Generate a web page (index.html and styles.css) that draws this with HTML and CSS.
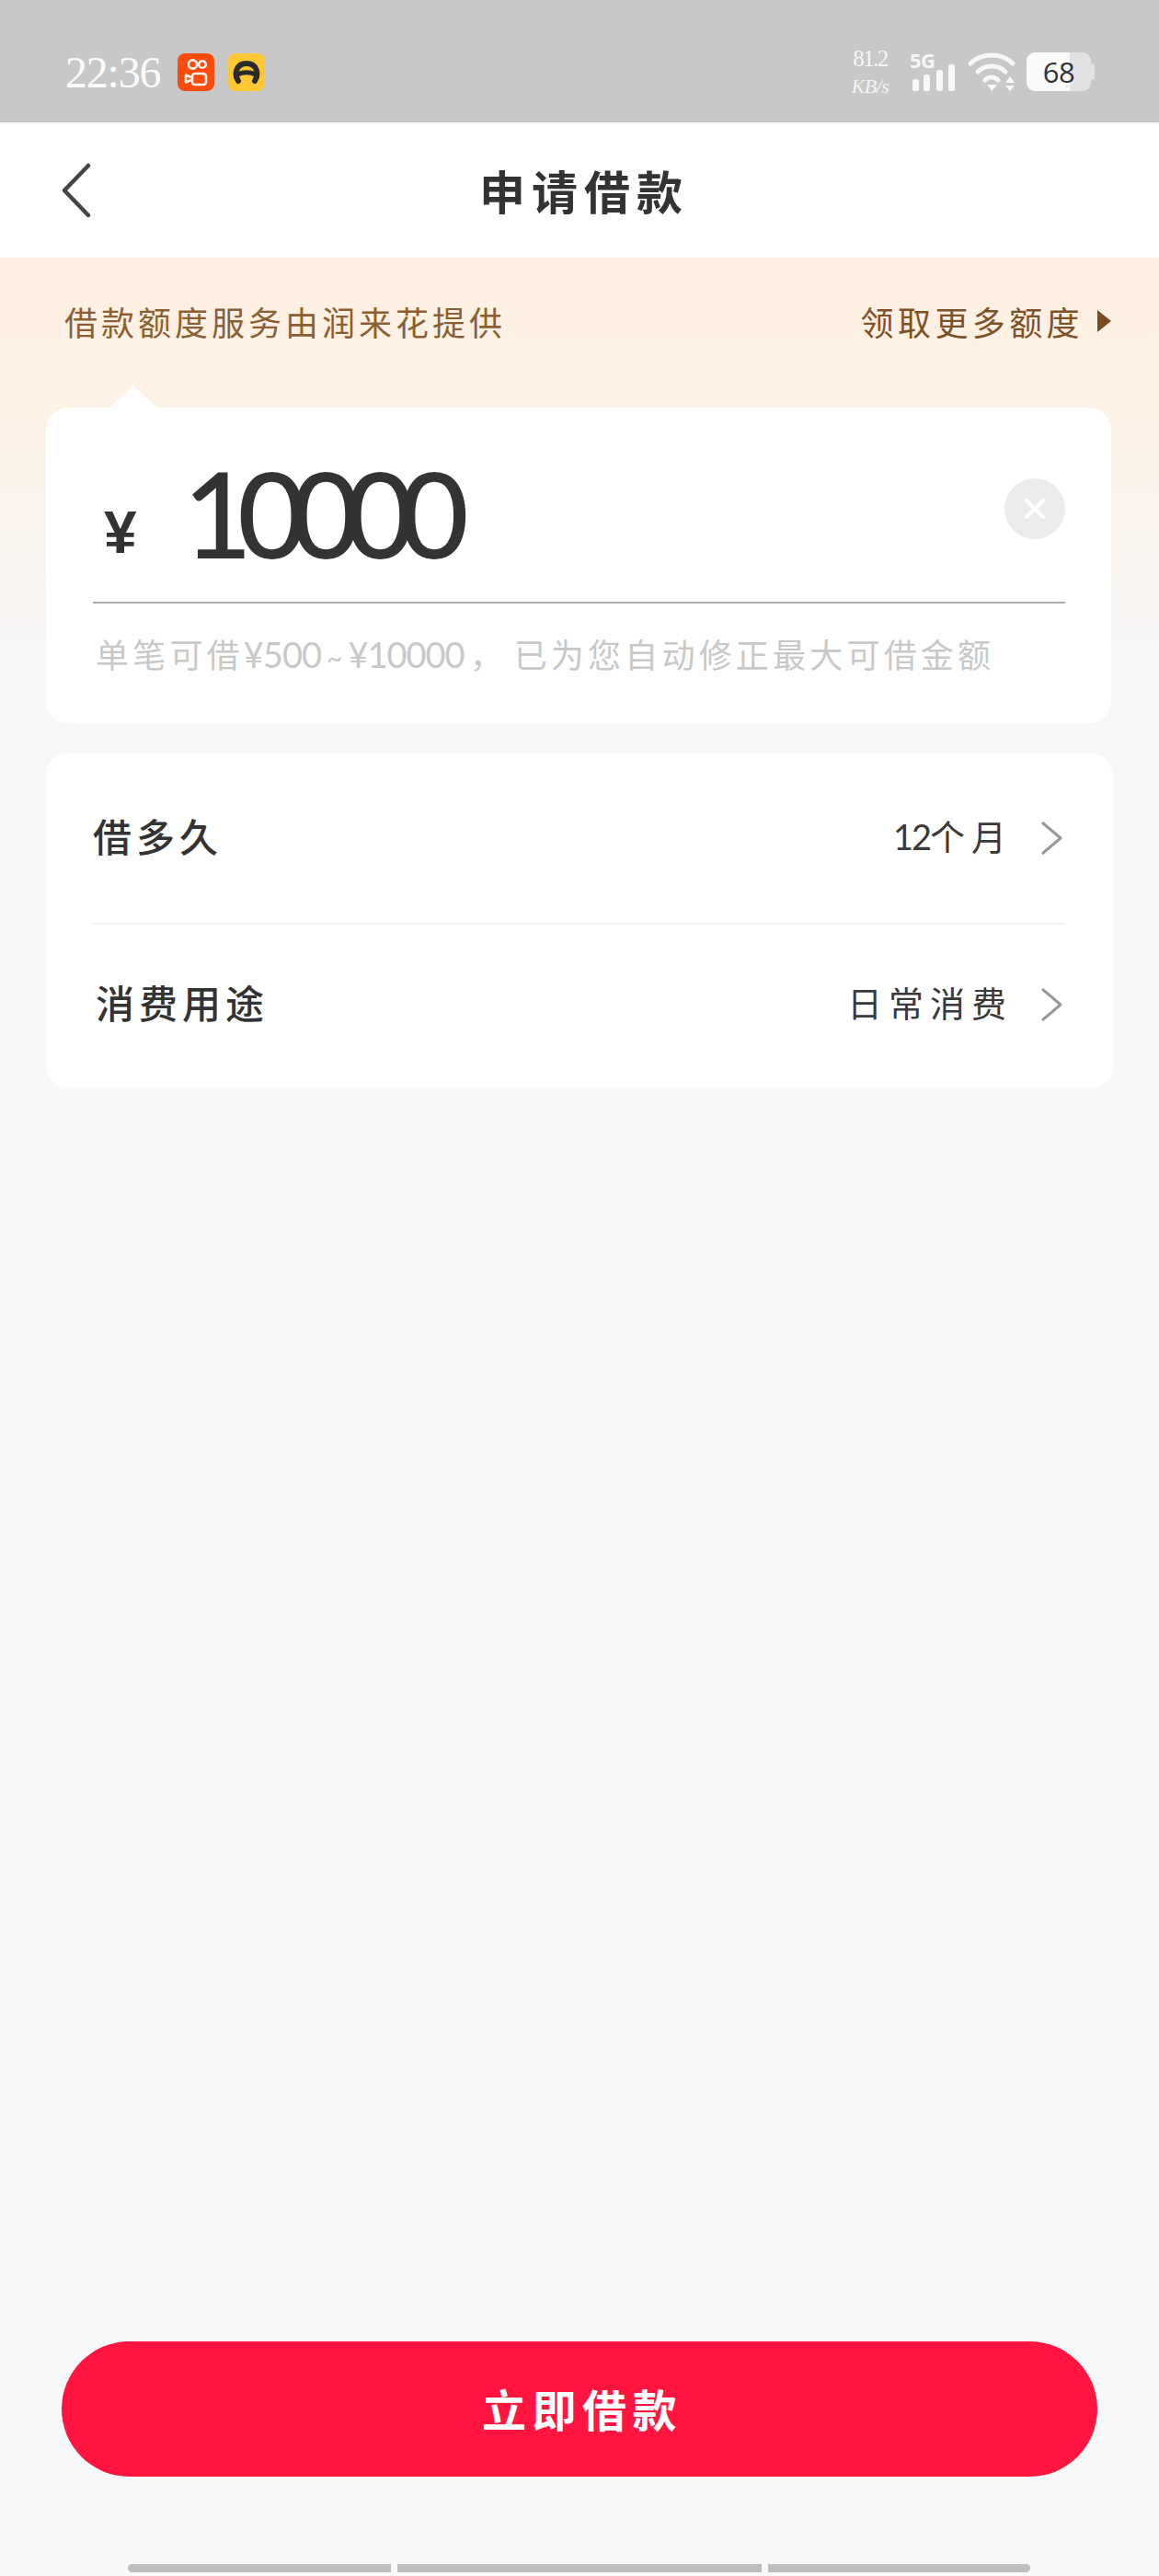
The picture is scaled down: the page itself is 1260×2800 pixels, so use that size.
FILE: index.html
```html
<!DOCTYPE html>
<html lang="zh-CN">
<head>
<meta charset="utf-8">
<title>申请借款</title>
<link rel="stylesheet" href="styles.css">
</head>
<body>
<div class="page">
  <header class="status">
    <div class="status-left">
      <span class="time">22:36</span>
      <svg class="app-icon" viewBox="0 0 40 41"><rect width="40" height="41" rx="8" fill="#fb4c0e"/><g fill="none" stroke="#fff3ea" stroke-width="2.6"><circle cx="16.5" cy="12" r="4.6"/><circle cx="27" cy="12" r="3.8"/><rect x="16" y="22" width="15" height="12" rx="3"/><path d="M15 26l-6-2.5v8L15 29" stroke-linejoin="round"/></g></svg>
      <svg class="app-icon car" viewBox="0 0 40 41"><rect width="40" height="41" rx="8" fill="#fec733"/><path d="M11 30C6 22 9 11 20 11S34 22 29 30" fill="none" stroke="#2a2a2a" stroke-width="6" stroke-linecap="round"/><path d="M10 23Q20 18.500 30 23" fill="none" stroke="#2a2a2a" stroke-width="5"/></svg>
    </div>
    <div class="status-right">
      <div class="speed"><span class="speed-num">81.2</span><span class="speed-unit">KB/s</span></div>
      <div class="signal">
        <span class="net">5G</span>
        <svg class="bars" viewBox="0 0 48 29"><rect x="1" y="16" width="7" height="13" rx="2.500"/><rect x="13" y="11" width="7" height="18" rx="2.500"/><rect x="27" y="6" width="7" height="23" rx="2.500"/><rect x="40" y="0" width="7" height="29" rx="2.500"/></svg>
      </div>
      <svg class="wifi" viewBox="0 0 56 42"><g fill="none" stroke="#f7f7f7" stroke-width="5" stroke-linecap="round"><path d="M5 12C17 0 39 0 51 12"/><path d="M13 21C21 13 35 13 43 21"/><path d="M21 30C25 26 31 26 35 30"/></g><path d="M23 35h11l-5.500 7z M43 33l5-7 5 7z M43 36h10l-5 6z" fill="#f7f7f7"/></svg>
      <div class="battery"><span class="battery-level"></span><span class="battery-rest"></span><span class="battery-nub"></span><span class="battery-num">68</span></div>
    </div>
  </header>

  <nav class="nav">
    <svg class="back" viewBox="0 0 32 60"><path d="M29 3L3 30l26 27" fill="none" stroke="#444" stroke-width="4.500" stroke-linecap="round" stroke-linejoin="round"/></svg>
    <h1 class="title">申请借款</h1>
  </nav>

  <main class="main">
    <div class="banner">
      <span class="banner-text">借款额度服务由润来花提供</span>
      <span class="banner-link">领取更多额度<i class="tri"></i></span>
    </div>

    <section class="card amount-card">
      <div class="amount-row">
        <span class="yen">¥</span>
        <span class="amount">10000</span>
        <span class="clear"><svg viewBox="0 0 66 66"><path d="M24 24l18 18M42 24L24 42" stroke="#fff" stroke-width="4" stroke-linecap="round"/></svg></span>
      </div>
      <p class="hint">单笔可借<span class="hint-num">¥500</span><span class="hint-tilde">~</span><span class="hint-num">¥10000</span><span class="hint-comma">，</span>已为您自动修正最大可借金额</p>
    </section>

    <section class="card options">
      <div class="option">
        <span class="option-label">借多久</span>
        <span class="option-value"><span class="val-num">12</span>个月</span>
        <svg class="chev" viewBox="0 0 24 38"><path d="M2 2l20 17L2 36" fill="none" stroke="#999" stroke-width="3" stroke-linejoin="round"/></svg>
      </div>
      <div class="option option-next">
        <span class="option-label">消费用途</span>
        <span class="option-value">日常消费</span>
        <svg class="chev" viewBox="0 0 24 38"><path d="M2 2l20 17L2 36" fill="none" stroke="#999" stroke-width="3" stroke-linejoin="round"/></svg>
      </div>
    </section>

    <button class="submit">立即借款</button>

    <div class="gesture">
      <span class="seg seg-a"></span><span class="seg seg-b"></span><span class="seg seg-c"></span>
    </div>
  </main>
</div>
</body>
</html>
```

FILE: styles.css
```css
* { box-sizing: border-box; }
html, body { margin: 0; padding: 0; }
body {
  width: 1260px;
  height: 2800px;
  overflow: hidden;
  background: #f7f8fa;
  font-family: "Noto Sans CJK SC", "Noto Sans", sans-serif;
  color: #333;
}
.page { display: flex; flex-direction: column; height: 2800px; }

/* status bar */
.status {
  height: 133px;
  flex: none;
  background: #c8c8c8;
  display: flex;
  justify-content: space-between;
  padding: 52px 70px 0 71px;
  color: #fff;
}
.status-left { display: flex; align-items: flex-start; height: 48px; padding-top: 6px; }
.time {
  font: 48px/41px "Liberation Serif", serif;
  letter-spacing: -1.2px;
  width: 122px;
  color: #fbfbfb;
}
.app-icon { width: 40px; height: 41px; display: block; }
.car { margin-left: 15px; }
.status-right { display: flex; align-items: flex-start; height: 48px; }
.speed { width: 50px; margin-left: -2px; display: flex; flex-direction: column; align-items: center; }
.speed-num { font: 25px/24px "Liberation Serif", serif; letter-spacing: -1.6px; color: #f5f5f5; }
.speed-unit { font: italic 22px/20px "Liberation Serif", serif; margin-top: 8px; color: #f5f5f5; letter-spacing: -0.5px; }
.signal { position: relative; width: 50px; height: 48px; margin-left: 18px; }
.net { display: block; font: 700 22px/20px "Open Sans", sans-serif; margin-top: 3px; color: #f7f7f7; letter-spacing: -0.5px; }
.bars { position: absolute; left: 2px; top: 18px; width: 48px; height: 29px; fill: #f7f7f7; }
.wifi { width: 56px; height: 42px; margin: 5px 0 0 11px; display: block; }
.battery { display: flex; margin: 5px 0 0 10px; height: 42px; align-items: center; position: relative; }
.battery-level { width: 47px; height: 42px; background: #fafafa; border-radius: 9px 0 0 9px; }
.battery-rest { width: 23px; height: 42px; background: #e2e2e2; border-radius: 0 9px 9px 0; }
.battery-nub { width: 4px; height: 18px; background: #e2e2e2; border-radius: 0 3px 3px 0; }
.battery-num {
  position: absolute;
  left: 0;
  top: 0;
  width: 70px;
  text-align: center;
  color: #333;
  font: 31px/42px "Open Sans", sans-serif;
  letter-spacing: -0.5px;
}

/* navigation */
.nav {
  height: 147px;
  flex: none;
  background: #fff;
  display: flex;
  align-items: center;
  justify-content: center;
  position: relative;
}
.back { position: absolute; left: 67px; top: 44px; width: 32px; height: 60px; }
.title { margin: -2px 0 0 10px; font-size: 50px; line-height: 60px; font-weight: 700; letter-spacing: 7px; color: #333; }

/* main */
.main {
  flex: 1;
  display: flex;
  flex-direction: column;
  background: linear-gradient(#fef0e2 0, #fdf2e6 160px, #f7f8fa 480px);
}
.banner {
  display: flex;
  justify-content: space-between;
  padding: 44px 52px 0 70px;
  height: 163px;
  align-items: flex-start;
  color: #8a5f33;
  font-size: 36px;
  line-height: 50px;
  letter-spacing: 4px;
}
.banner-link { display: flex; align-items: center; color: #7d5228; letter-spacing: 4.4px; }
.tri {
  width: 0; height: 0;
  border-left: 15px solid #7a4a20;
  border-top: 12px solid transparent;
  border-bottom: 12px solid transparent;
  margin-left: 15px;
}
.card { background: #fff; margin: 0 50px; border-radius: 24px; position: relative; }
.amount-card { height: 343px; width: 1158px; }
.amount-card::before {
  content: "";
  position: absolute;
  left: 68px;
  top: -24px;
  width: 54px;
  height: 25px;
  background: #fff;
  clip-path: polygon(50% 0, 100% 100%, 0 100%);
}
.amount-row {
  height: 213px;
  margin: 0 50px 0 51px;
  border-bottom: 2px solid #aaa;
  display: flex;
  align-items: flex-start;
}
.yen { font: 700 64px/60px "Liberation Sans", sans-serif; margin: 106px 0 0 12px; width: 86px; color: #333; }
.amount { font: 500 130px/134px "Lato", sans-serif; letter-spacing: -16.500px; color: #333; margin-top: 47px; flex: 1; }
.clear { width: 66px; height: 66px; margin: 77px 0 0 0; border-radius: 50%; background: #ebebeb; flex: none; }
.clear svg { display: block; width: 66px; height: 66px; }
.hint {
  margin: 29px 0 0 54px;
  font-size: 36px;
  line-height: 50px;
  letter-spacing: 4.2px;
  color: #c8c8c8;
  white-space: nowrap;
}
.hint-num { font-family: "Lato", sans-serif; letter-spacing: -1px; font-size: 38px; }
.hint-tilde { font-size: 30px; margin: 0 6px 0 6px; letter-spacing: 0; font-family: "Lato", sans-serif; }
.hint-comma { letter-spacing: 0; margin: 0 12px 0 6px; }

.options { margin-top: 33px; height: 364px; width: 1160px; }
.option {
  height: 186px;
  padding-bottom: 6px;
  margin: 0 52px 0 51px;
  display: flex;
  align-items: center;
  border-bottom: 2px solid #f3f3f3;
}
.option-next { height: 178px; padding-bottom: 10px; border-bottom: 0; }
.option-next .option-label { padding-left: 3px; }
.option-label { font-size: 42px; line-height: 60px; letter-spacing: 5px; font-weight: 500; flex: 1; color: #333; }
.option-value { font-size: 38px; line-height: 60px; letter-spacing: 7px; color: #3a3a3a; }
.val-num { font-family: "Lato", sans-serif; letter-spacing: -2px; }
.chev { width: 24px; height: 38px; margin: 6px 3px 0 30px; flex: none; }

.submit {
  margin: auto 67px 0;
  width: 1126px;
  height: 147px;
  border: 0;
  border-radius: 74px;
  background: #ff1540;
  color: #fff;
  font-family: inherit;
  font-size: 48px;
  font-weight: 700;
  letter-spacing: 6.500px;
  padding: 0 0 3px 6px;
  flex: none;
}
.gesture { display: flex; gap: 7px; padding: 95px 0 4px 139px; flex: none; }
.seg { height: 9px; background: #bdbec0; display: block; }
.seg-a { width: 286px; border-radius: 5px 0 0 5px; }
.seg-b { width: 396px; }
.seg-c { width: 285px; border-radius: 0 5px 5px 0; }
```
